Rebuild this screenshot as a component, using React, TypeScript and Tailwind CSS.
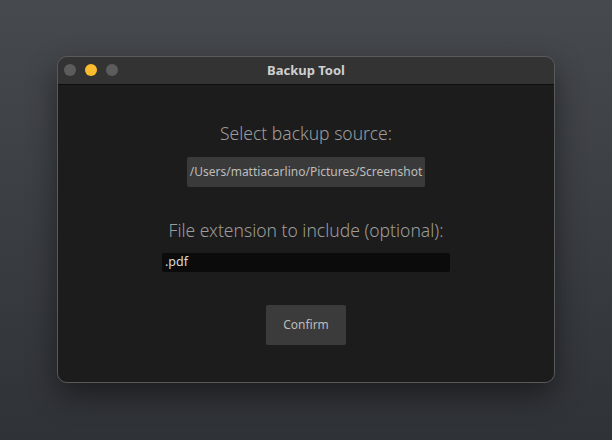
export default function App() {
  const font = { fontFamily: '"Noto Sans", "Open Sans", sans-serif' };

  return (
    <div
      className="w-[612px] h-[440px] bg-gradient-to-b from-[#46494e] to-[#2f3237] pt-[56px] pl-[57px]"
      style={font}
    >
      <div className="w-[498px] h-[327px] rounded-[10px] border border-[#5a5a5a] overflow-hidden flex flex-col shadow-[0_12px_30px_rgba(0,0,0,0.45)]">
        {/* title bar */}
        <div className="relative h-[28px] bg-[#333333] border-b border-[#0e0e0e] flex items-center justify-center">
          <div className="absolute left-[6px] top-[7px] flex gap-[9px]">
            <span className="w-[12px] h-[12px] rounded-full bg-[#5c5c5c]" />
            <span className="w-[12px] h-[12px] rounded-full bg-[#fbbb2e]" />
            <span className="w-[12px] h-[12px] rounded-full bg-[#5c5c5c]" />
          </div>
          <span className="text-[13px] font-bold text-[#cfcfcf]">Backup Tool</span>
        </div>

        {/* body */}
        <div className="flex-1 bg-[#1c1c1c] flex flex-col items-center pt-[35px]">
          <div className="text-[17.5px] font-light text-[#9c9c9c] leading-[26px]">Select backup source:</div>
          <div className="mt-[11px] h-[30px] px-[3px] bg-[#3a3a3a] rounded-[2px] flex items-center text-[12px] text-[#bdbdbd]">
            /Users/mattiacarlino/Pictures/Screenshot
          </div>

          <div className="mt-[30px] text-[17.5px] font-light text-[#9c9c9c] leading-[26px]">
            File extension to include (optional):
          </div>
          <div className="mt-[10px] w-[288px] h-[19px] bg-[#0b0b0b] rounded-[2px] flex items-center px-[3px] text-[12.5px] text-[#d8d8d8]">
            .pdf
          </div>

          <button className="mt-[33px] w-[80px] h-[40px] bg-[#3b3b3b] rounded-[2px] text-[12px] text-[#bcbcbc]">
            Confirm
          </button>
        </div>
      </div>
    </div>
  );
}
